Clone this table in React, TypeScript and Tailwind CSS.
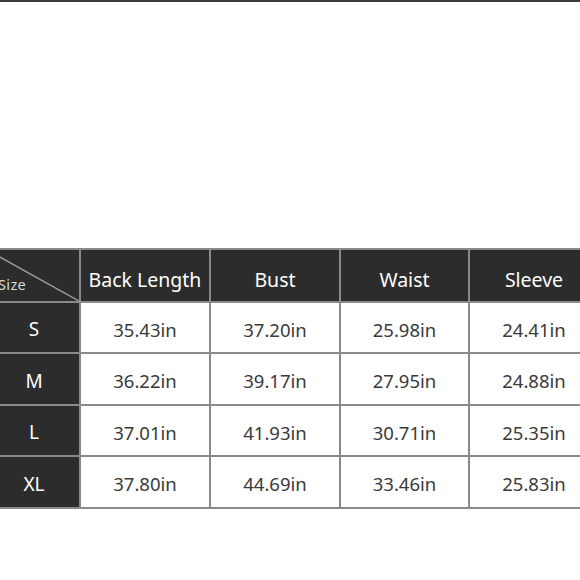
const headers = ["Back Length", "Bust", "Waist", "Sleeve"];

const rows = [
  { size: "S", values: ["35.43in", "37.20in", "25.98in", "24.41in"] },
  { size: "M", values: ["36.22in", "39.17in", "27.95in", "24.88in"] },
  { size: "L", values: ["37.01in", "41.93in", "30.71in", "25.35in"] },
  { size: "XL", values: ["37.80in", "44.69in", "33.46in", "25.83in"] },
];

export default function App() {
  return (
    <div
      className="w-[580px] h-[580px] bg-white overflow-hidden border-t-2 border-[#3c3c3c]"
      style={{ fontFamily: '"Noto Sans", "Open Sans", sans-serif' }}
    >
      <div className="mt-[246px] ml-[-15px] w-max grid grid-cols-[92px_128px_128px_127px_128px] grid-rows-[51px_49px_50px_49px_50px] gap-[2px] border-2 border-[#8a8a8a] bg-[#8a8a8a]">
        <div className="relative bg-[#2c2c2c] overflow-hidden">
          <svg className="absolute inset-0 w-full h-full" viewBox="0 0 92 51" preserveAspectRatio="none">
            <line x1="0" y1="0" x2="92" y2="51" stroke="#9a9a9a" strokeWidth="1.5" />
          </svg>
          <span className="absolute left-[11px] bottom-[5px] text-[14.5px] tracking-wide text-[#d8d8d8]">
            Size
          </span>
        </div>
        {headers.map((h) => (
          <div
            key={h}
            className="bg-[#2c2c2c] flex items-center justify-center pt-2 text-[19.5px] text-white"
          >
            {h}
          </div>
        ))}
        {rows.map((r) => (
          <div key={r.size} className="contents">
            <div className="bg-[#2c2c2c] flex items-center justify-center pt-1 pl-[2px] text-[19px] text-white">
              {r.size}
            </div>
            {r.values.map((v, i) => (
              <div
                key={i}
                className="bg-white flex items-center justify-center pt-1 text-[18.5px] text-[#3a3a3a]"
              >
                {v}
              </div>
            ))}
          </div>
        ))}
      </div>
    </div>
  );
}
